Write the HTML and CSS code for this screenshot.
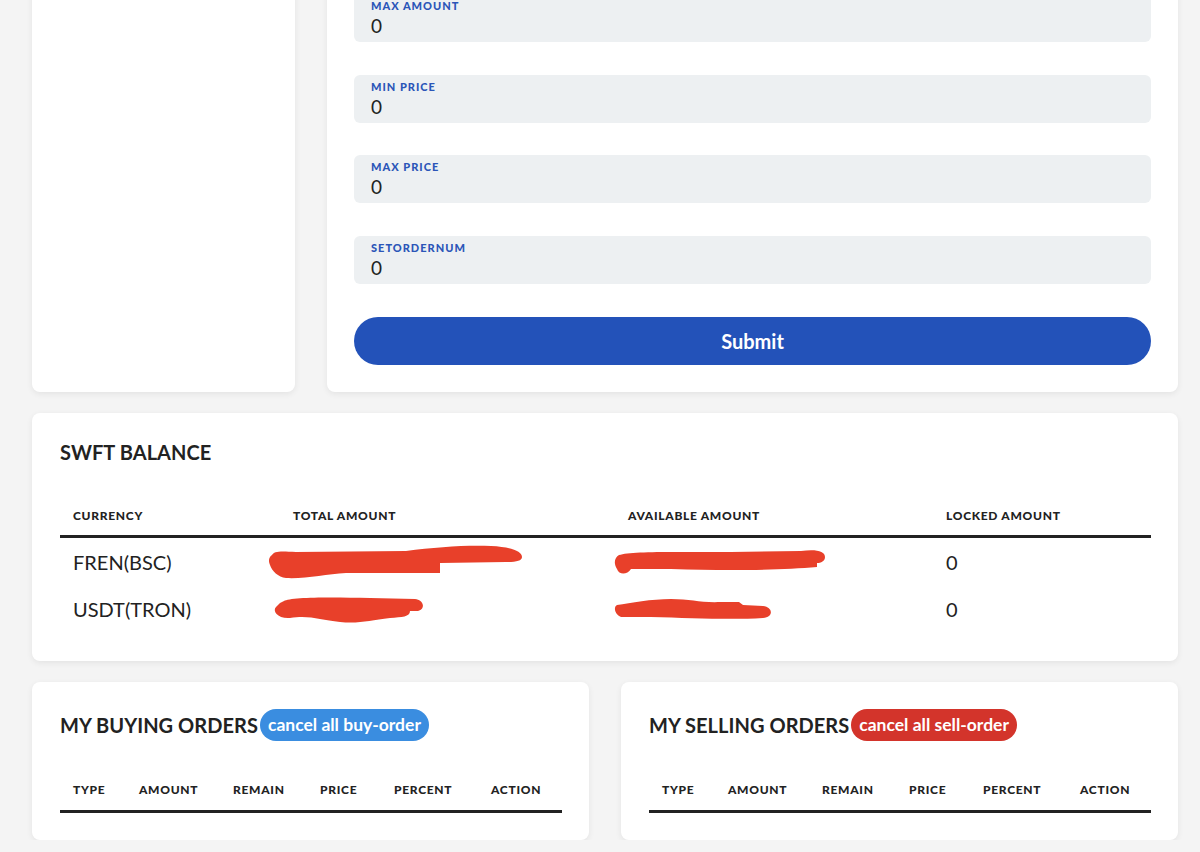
FILE: index.html
```html
<!DOCTYPE html>
<html lang="en">
<head>
<meta charset="utf-8">
<title>SWFT</title>
<link rel="stylesheet" href="styles.css">
</head>
<body>
<div class="page">
  <div class="top-row">
    <div class="card side-card"></div>
    <div class="card form-card">
      <div class="field"><span class="field-label">MAX AMOUNT</span><span class="field-value">0</span></div>
      <div class="field"><span class="field-label">MIN PRICE</span><span class="field-value">0</span></div>
      <div class="field"><span class="field-label">MAX PRICE</span><span class="field-value">0</span></div>
      <div class="field"><span class="field-label">SETORDERNUM</span><span class="field-value">0</span></div>
      <button class="submit">Submit</button>
    </div>
  </div>

  <div class="card balance-card">
    <h2 class="card-title">SWFT BALANCE</h2>
    <table class="tbl balance-tbl">
      <thead>
        <tr><th class="c1">CURRENCY</th><th class="c2">TOTAL AMOUNT</th><th class="c3">AVAILABLE AMOUNT</th><th class="c4">LOCKED AMOUNT</th></tr>
      </thead>
      <tbody>
        <tr>
          <td>FREN(BSC)</td>
          <td><svg class="mask mask-a" width="258" height="38" viewBox="0 0 258 38"><path d="M6 12 C8 8 14 8 30 9 L140 8 C170 4 200 2 225 3 C245 4 256 8 256 14 C256 18 250 19 240 19 L174 20 L174 30 L80 30 C60 31 40 36 20 35 C12 34 6 28 4 22 C2 18 3 14 6 12 Z"/></svg></td>
          <td><svg class="mask mask-b" width="218" height="34" viewBox="0 0 218 34"><path d="M8 10 C20 6 60 7 120 7 L190 6 C205 4 214 6 214 12 C214 16 210 18 206 18 L206 22 C170 25 120 26 60 24 L20 24 C16 30 8 30 6 24 C2 18 4 12 8 10 Z"/></svg></td>
          <td>0</td>
        </tr>
        <tr>
          <td>USDT(TRON)</td>
          <td><svg class="mask mask-c" width="158" height="36" viewBox="0 0 158 36"><path d="M14 10 C20 6 60 6 100 7 L145 8 C154 9 156 18 148 20 L140 20 C140 26 132 26 120 27 C100 29 90 33 70 31 C50 29 40 24 20 27 C8 28 2 20 6 16 L10 12 Z"/></svg></td>
          <td><svg class="mask mask-d" width="166" height="32" viewBox="0 0 166 32"><path d="M6 12 C20 10 40 6 60 6 C80 6 90 10 110 9 L128 9 L132 12 L152 13 C162 14 163 24 152 25 C120 27 80 25 40 24 L10 24 C4 22 2 14 6 12 Z"/></svg></td>
          <td>0</td>
        </tr>
      </tbody>
    </table>
  </div>

  <div class="bottom-row">
    <div class="card orders-card">
      <div class="orders-head">
        <h2 class="card-title">MY BUYING ORDERS</h2>
        <button class="pill pill-buy">cancel all buy-order</button>
      </div>
      <table class="tbl orders-tbl">
        <thead><tr><th class="o1">TYPE</th><th class="o2">AMOUNT</th><th class="o3">REMAIN</th><th class="o4">PRICE</th><th class="o5">PERCENT</th><th class="o6">ACTION</th></tr></thead>
      </table>
    </div>
    <div class="card orders-card">
      <div class="orders-head">
        <h2 class="card-title">MY SELLING ORDERS</h2>
        <button class="pill pill-sell">cancel all sell-order</button>
      </div>
      <table class="tbl orders-tbl">
        <thead><tr><th class="o1">TYPE</th><th class="o2">AMOUNT</th><th class="o3">REMAIN</th><th class="o4">PRICE</th><th class="o5">PERCENT</th><th class="o6">ACTION</th></tr></thead>
      </table>
    </div>
  </div>
</div>
</body>
</html>
```

FILE: styles.css
```css
* { box-sizing: border-box; }
html, body { margin: 0; padding: 0; }
body {
  background: #f4f4f4;
  font-family: "Lato", "Liberation Sans", sans-serif;
  color: #222;
  overflow: hidden;
}
.page {
  padding: 0 22px 0 32px;
  margin-top: -33px;
  display: flex;
  flex-direction: column;
  gap: 21px;
}
.card {
  background: #fff;
  border-radius: 8px;
  box-shadow: 0 2px 6px rgba(0,0,0,0.07);
}
.top-row {
  display: flex;
  gap: 32px;
}
.side-card { width: 263px; flex: none; }
.form-card {
  flex: 1;
  padding: 27px;
  display: flex;
  flex-direction: column;
  gap: 32.7px;
}
.field {
  height: 48px;
  background: #edf0f2;
  border-radius: 6px;
  padding: 5px 18px 0 17px;
  display: flex;
  flex-direction: column;
}
.field-label {
  font-size: 11px;
  font-weight: 900;
  color: #2b55b8;
  letter-spacing: 1px;
  line-height: 14px;
}
.field-value {
  font-size: 19px;
  line-height: 26px;
  color: #222;
}
.submit {
  height: 48px;
  border: none;
  border-radius: 24px;
  background: #2352b9;
  color: #fff;
  font-family: inherit;
  font-size: 20px;
  font-weight: 700;
}
.card-title {
  margin: 0;
  font-size: 20px;
  font-weight: 700;
  letter-spacing: 0.05px;
  line-height: 24px;
  color: #222;
}
.balance-card {
  padding: 27px 27px 28px 28px;
}
.tbl {
  width: 100%;
  border-collapse: collapse;
  table-layout: fixed;
}
.tbl th {
  text-align: left;
  font-size: 12px;
  font-weight: 900;
  letter-spacing: 0.7px;
  padding: 0 0 0 13px;
  height: 42px;
  vertical-align: middle;
  border-bottom: 3px solid #222;
}
.balance-tbl { margin-top: 31px; }
.c1 { width: 220px; }
.c2 { width: 335px; }
.c3 { width: 318px; }
.c4 { width: auto; }
.balance-tbl td {
  height: 48px;
  padding: 0 0 0 13px;
  font-size: 20px;
  vertical-align: middle;
}
.mask { display: block; fill: #e8402a; }
.mask-a { margin-left: -27px; }
.mask-b { margin-left: -17px; }
.mask-c { margin-left: -23px; }
.mask-d { margin-left: -17px; }
.bottom-row {
  display: flex;
  gap: 32px;
}
.orders-card {
  flex: 1;
  padding: 27px 27px 27px 28px;
  height: 158px;
}
.orders-head {
  display: flex;
  align-items: center;
  gap: 2px;
}
.pill {
  border: none;
  height: 32px;
  border-radius: 16px;
  padding: 0 8px;
  color: #fff;
  font-family: inherit;
  font-size: 17.5px;
  font-weight: 700;
}
.pill-buy { background: #3a8de0; }
.pill-sell { background: #d3342b; }
.orders-tbl { margin-top: 27px; }
.orders-tbl th { height: 44px; }
.o1 { width: 66px; }
.o2 { width: 94px; }
.o3 { width: 87px; }
.o4 { width: 74px; }
.o5 { width: 97px; }
.o6 { width: auto; }
```
